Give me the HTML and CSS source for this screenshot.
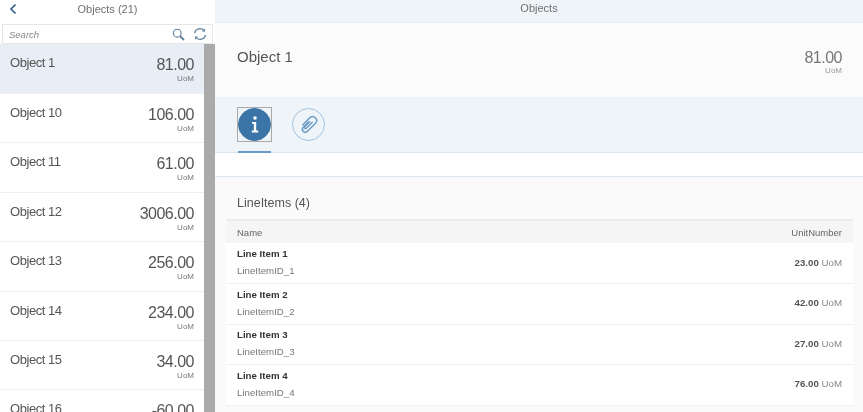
FILE: index.html
```html
<!DOCTYPE html>
<html lang="en">

<head>
    <meta charset="UTF-8">
    <meta name="viewport" content="width=device-width, initial-scale=1.0">
    <title>Objects</title>
    <link rel="stylesheet" href="styles.css">
</head>

<body>
    <div class="app">
        <aside class="master">
            <header class="master-header">
                <svg class="back-icon" width="8" height="12" viewBox="0 0 8 12">
                    <path d="M6.5 1.5 L2 6 L6.5 10.5" fill="none" stroke="#346187" stroke-width="1.7" />
                </svg>
                <span>Objects (21)</span>
            </header>
            <div class="search">
                <span class="search-text">Search</span>
                <svg class="search-icon" width="13" height="13" viewBox="0 0 13 13">
                    <circle cx="5.2" cy="5.2" r="3.9" fill="none" stroke="#5f7f9c" stroke-width="1.1" />
                    <path d="M8 8 L12 12" stroke="#5f7f9c" stroke-width="1.8" />
                </svg>
                <svg class="refresh-icon" width="14" height="14" viewBox="0 0 14 14">
                    <path d="M1.6 6.2 A5.4 5.4 0 0 1 11.4 4" fill="none" stroke="#5f7f9c" stroke-width="1.3" />
                    <path d="M12.4 7.8 A5.4 5.4 0 0 1 2.6 10" fill="none" stroke="#5f7f9c" stroke-width="1.3" />
                    <path d="M12 1.4 V4.6 H8.8 Z M2 12.6 V9.4 H5.2 Z" fill="#5f7f9c" />
                </svg>
            </div>
            <div class="list-wrap">
                <ul class="object-list">
                    <li class="object selected">
                        <span class="object-name">Object 1</span>
                        <div class="object-num"><span class="num">81.00</span><span class="uom">UoM</span></div>
                    </li>
                    <li class="object">
                        <span class="object-name">Object 10</span>
                        <div class="object-num"><span class="num">106.00</span><span class="uom">UoM</span></div>
                    </li>
                    <li class="object">
                        <span class="object-name">Object 11</span>
                        <div class="object-num"><span class="num">61.00</span><span class="uom">UoM</span></div>
                    </li>
                    <li class="object">
                        <span class="object-name">Object 12</span>
                        <div class="object-num"><span class="num">3006.00</span><span class="uom">UoM</span></div>
                    </li>
                    <li class="object">
                        <span class="object-name">Object 13</span>
                        <div class="object-num"><span class="num">256.00</span><span class="uom">UoM</span></div>
                    </li>
                    <li class="object">
                        <span class="object-name">Object 14</span>
                        <div class="object-num"><span class="num">234.00</span><span class="uom">UoM</span></div>
                    </li>
                    <li class="object">
                        <span class="object-name">Object 15</span>
                        <div class="object-num"><span class="num">34.00</span><span class="uom">UoM</span></div>
                    </li>
                    <li class="object">
                        <span class="object-name">Object 16</span>
                        <div class="object-num"><span class="num">-60.00</span><span class="uom">UoM</span></div>
                    </li>
                </ul>
                <div class="scrollbar"></div>
            </div>
        </aside>

        <main class="detail">
            <header class="detail-header">Objects</header>
            <section class="object-header">
                <h1>Object 1</h1>
                <div class="object-num">
                    <span class="num">81.00</span>
                    <span class="uom">UoM</span>
                </div>
            </section>
            <nav class="tabs">
                <div class="tab active">
                    <div class="tab-box">
                        <span class="tab-circle">
                            <svg width="8" height="17" viewBox="0 0 8 17">
                                <circle cx="4" cy="2" r="1.8" fill="#fff" />
                                <path d="M1 6 H5.2 V14.6 H7.2 V16.4 H0.8 V14.6 H2.8 V7.8 H1 Z" fill="#fff" />
                            </svg>
                        </span>
                    </div>
                </div>
                <div class="tab">
                    <div class="tab-box">
                        <span class="tab-circle">
                            <svg width="22" height="22" viewBox="0 0 22 22">
                                <path d="M9.6 6.8 L4.3 12.2 A2.9 2.9 0 0 0 8.5 16.3 L16.8 8 A4 4 0 0 0 11.2 2.4 L3.4 10.2" fill="none" stroke="#6f9ec6" stroke-width="1.5" transform="translate(1 1)" />
                                <path d="M13.6 7 L7.4 13.2 A1.1 1.1 0 0 1 5.8 11.6 L11 6.4" fill="none" stroke="#6f9ec6" stroke-width="1.5" transform="translate(1 1)" />
                            </svg>
                        </span>
                    </div>
                </div>
            </nav>
            <div class="spacer"></div>
            <section class="items">
                <h2>LineItems (4)</h2>
                <table>
                    <thead>
                        <tr>
                            <th>Name</th>
                            <th class="right">UnitNumber</th>
                        </tr>
                    </thead>
                    <tbody>
                        <tr>
                            <td><b>Line Item 1</b><span class="item-id">LineItemID_1</span></td>
                            <td class="right"><b>23.00</b> <span class="item-uom">UoM</span></td>
                        </tr>
                        <tr>
                            <td><b>Line Item 2</b><span class="item-id">LineItemID_2</span></td>
                            <td class="right"><b>42.00</b> <span class="item-uom">UoM</span></td>
                        </tr>
                        <tr>
                            <td><b>Line Item 3</b><span class="item-id">LineItemID_3</span></td>
                            <td class="right"><b>27.00</b> <span class="item-uom">UoM</span></td>
                        </tr>
                        <tr>
                            <td><b>Line Item 4</b><span class="item-id">LineItemID_4</span></td>
                            <td class="right"><b>76.00</b> <span class="item-uom">UoM</span></td>
                        </tr>
                    </tbody>
                </table>
            </section>
        </main>
    </div>
</body>

</html>
```

FILE: styles.css
```css
* {
    box-sizing: border-box;
    margin: 0;
    padding: 0;
}

html,
body {
    height: 100%;
    overflow: hidden;
}

body {
    font-family: "Liberation Sans", Arial, sans-serif;
    color: #555;
    background: #fff;
}

.app {
    display: flex;
    height: 412px;
    overflow: hidden;
    filter: blur(0.4px);
}

/* left column */
.master {
    display: flex;
    flex-direction: column;
    width: 215px;
    flex-shrink: 0;
    background: #fff;
}

.master-header {
    position: relative;
    height: 23px;
    padding-top: 2px;
    font-size: 11px;
    line-height: 15px;
    text-align: center;
    color: #707070;
}

.back-icon {
    position: absolute;
    left: 9px;
    top: 3px;
}

.search {
    display: flex;
    align-items: center;
    height: 20px;
    margin: 1px 0 0 2px;
    width: 211px;
    padding: 0 5px 0 6px;
    border: 1px solid #e6e6e6;
    font-size: 9.5px;
}

.search-text {
    flex: 1;
    font-style: italic;
    color: #888;
}

.search-icon {
    margin-right: 8px;
}

.list-wrap {
    display: flex;
    flex: 1;
    min-height: 0;
}

.object-list {
    flex: 1;
    list-style: none;
    overflow: hidden;
}

.scrollbar {
    width: 11px;
    background: #aaa;
}

.object {
    display: flex;
    justify-content: space-between;
    height: 49.4px;
    padding: 11px 10px 0 10px;
    border-bottom: 1px solid #f0f0f0;
}

.object.selected {
    height: 50px;
    background: #e7eef6;
}

.object-name {
    font-size: 13px;
    letter-spacing: -0.45px;
    line-height: 16px;
}

.object-num {
    display: flex;
    flex-direction: column;
    align-items: flex-end;
}

.num {
    font-size: 16px;
    letter-spacing: -0.5px;
    line-height: 19px;
}

.uom {
    font-size: 8px;
    line-height: 10px;
    color: #777;
}

/* right column */
.detail {
    display: flex;
    flex-direction: column;
    flex: 1;
    min-width: 0;
    background: #fafafa;
}

.detail-header {
    height: 23px;
    padding-top: 2px;
    font-size: 11px;
    line-height: 13px;
    text-align: center;
    color: #707070;
    background: #eff4f9;
    border-bottom: 1px solid #e6edf5;
}

.object-header {
    display: flex;
    justify-content: space-between;
    height: 74px;
    padding: 24px 21px 0 22px;
    background: #fbfbfb;
}

.object-header h1 {
    font-size: 15px;
    font-weight: normal;
    line-height: 19px;
}

.object-header .num {
    margin-top: 1px;
    color: #777;
}

.object-header .uom {
    margin-top: -1px;
    color: #999;
}

.tabs {
    display: flex;
    gap: 21px;
    height: 56px;
    padding: 11px 0 0 23px;
    background: #eff4f9;
    border-bottom: 1px solid #dbe6f1;
}

.tab {
    width: 33px;
    height: 45px;
}

.tab.active {
    border-bottom: 2px solid #6a9bc6;
}

.tab-box {
    width: 33px;
    height: 33px;
}

.tab.active .tab-box {
    outline: 1px solid #a9a9a9;
}

.tab-circle {
    display: flex;
    align-items: center;
    justify-content: center;
    width: 33px;
    height: 33px;
    border: 1px solid #a3c1dc;
    border-radius: 50%;
}

.tab.active .tab-circle {
    background: #3b74a6;
    border-color: #3b74a6;
}

.spacer {
    height: 24px;
    background: #fff;
    border-bottom: 1px solid #dbe6f1;
}

.items {
    flex: 1;
    padding: 0 10px 0 11px;
}

.items h2 {
    height: 42px;
    padding: 19px 0 0 11px;
    font-size: 12.5px;
    font-weight: normal;
    line-height: 15px;
}

table {
    width: 100%;
    border-collapse: collapse;
    font-size: 9.7px;
}

th {
    height: 23px;
    padding: 0 11px;
    font-size: 9.5px;
    font-weight: normal;
    text-align: left;
    color: #666;
    background: #f5f5f5;
    border-top: 2px solid #ececec;
}

td {
    height: 40.5px;
    padding: 0 11px 2px;
    background: #fff;
    border-bottom: 1px solid #f0f0f0;
}

tbody b {
    color: #333;
}

th.right,
td.right {
    text-align: right;
}

td.right b {
    color: #555;
}

.item-id {
    display: block;
    margin-top: 6px;
    color: #777;
}

.item-uom {
    color: #888;
}
```
